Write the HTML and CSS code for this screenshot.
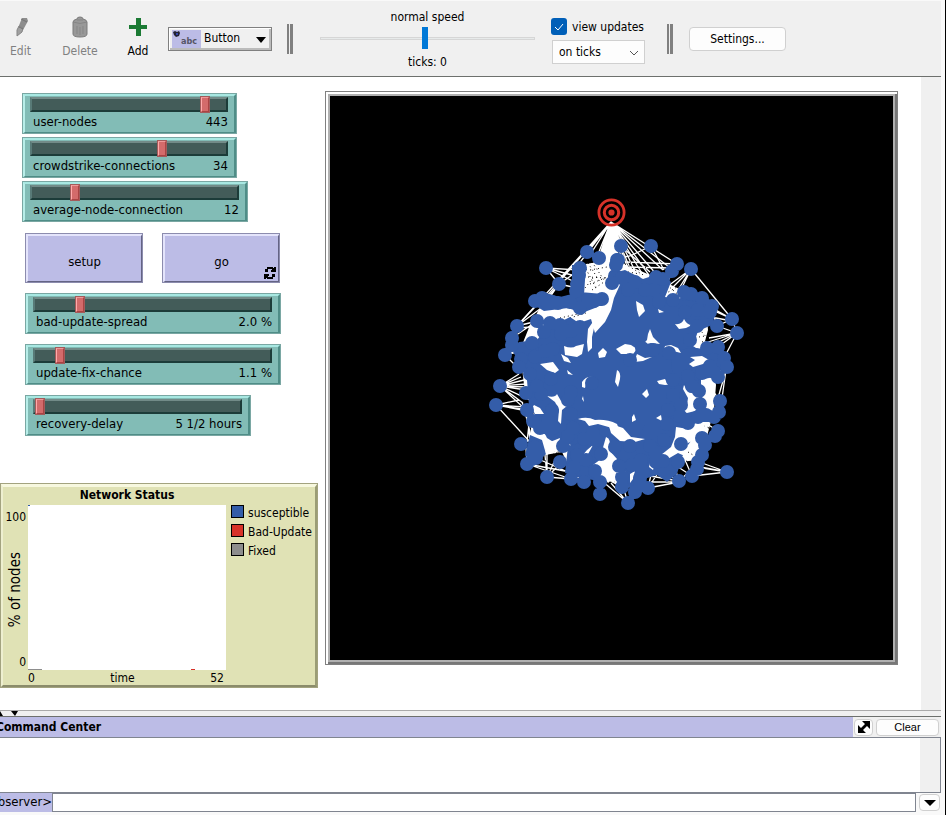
FILE: index.html
```html
<!DOCTYPE html>
<html lang="en">
<head>
<meta charset="utf-8">
<title>NetLogo</title>
<link rel="stylesheet" href="styles.css">
</head>
<body>
<div class="window">
  <header class="toolbar">
    <button class="tool" disabled>
      <svg width="20" height="22" viewBox="0 0 20 22"><path d="M11 2l5 0 1 3-5 9-5-2z" fill="#8d8d8d"/><path d="M8 10l4 2-1 4-5 4 0-6z" fill="#a0a0a0" stroke="#858585"/><path d="M10 3l6 3M8 11l4 2" stroke="#747474"/></svg>
      Edit
    </button>
    <button class="tool" disabled>
      <svg width="20" height="22" viewBox="0 0 20 22"><path d="M3 6q0-2 4-3 0-2 3-2t3 2q4 1 4 3v12q0 3-7 3t-7-3z" fill="#989898" stroke="#7b7b7b"/><path d="M3 6q7 3 14 0M7 4h6M7 10v8M10 11v8M13 10v8" fill="none" stroke="#858585"/></svg>
      Delete
    </button>
    <button class="tool">
      <svg width="20" height="22" viewBox="0 0 20 22"><path d="M8 2h5v7h6v4h-6v7H8v-7H1V9h7z" fill="#1b7a34"/></svg>
      Add
    </button>
    <div class="combo">
      <svg class="combo-icon" width="29" height="18" viewBox="0 0 29 18"><path fill="#bcbce6" d="M0 0h29v18H0z"/><path d="M1 2l2-1 2 1 2-1 1 2-1 3-3 1-2-2z" fill="#223"/><path d="M4 3h2v2H4z" fill="#34a"/><text x="9" y="14">abc</text></svg>
      <select class="combo-select" aria-label="Widget type"><option>Button</option></select>
      <svg class="combo-arrow" width="10" height="6" viewBox="0 0 10 6"><path d="M0 0h10L5 6z"/></svg>
    </div>
    <span class="divider"></span>
    <div class="speed">
      <label for="speed">normal speed</label>
      <input id="speed" class="speed-range" type="range" min="0" max="100" value="49">
      <span>ticks: 0</span>
    </div>
    <div class="updates">
      <label class="check"><input type="checkbox" checked><svg width="16" height="17" viewBox="0 0 16 17"><path d="M4 9l3 3 5-6" fill="none" stroke="#fff"/></svg>view updates</label>
      <div class="mode">
        <select aria-label="Update mode"><option>on ticks</option></select>
        <svg width="10" height="6" viewBox="0 0 10 6"><path d="M1 1l4 4 4-4" fill="none" stroke="#555"/></svg>
      </div>
    </div>
    <span class="divider"></span>
    <button class="settings">Settings...</button>
  </header>

  <main class="workspace">
    <section class="panel">
      <div class="group">
        <div class="slider medium"><input id="s1" type="range" min="0" max="485" value="443"><label for="s1">user-nodes</label><output for="s1">443</output></div>
        <div class="slider medium"><input id="s2" type="range" min="0" max="50" value="34"><label for="s2">crowdstrike-connections</label><output for="s2">34</output></div>
        <div class="slider large"><input id="s3" type="range" min="0" max="61" value="12"><label for="s3">average-node-connection</label><output for="s3">12</output></div>
      </div>
      <div class="group spaced">
        <div class="actions">
          <button class="action">setup</button>
          <button class="action">go
            <svg class="forever" width="12" height="12" viewBox="0 0 12 12"><path d="M1 5V2h2V0h6v1h1V0h2v5H7V3h1V2H4v3zM11 7v3H9v2H3v-1H2v1H0V7h5v2H4v1h4V7z"/></svg>
          </button>
        </div>
        <div class="slider wide"><input id="s4" type="range" min="0" max="11.2" step="0.1" value="2"><label for="s4">bad-update-spread</label><output for="s4">2.0 %</output></div>
        <div class="slider wide"><input id="s5" type="range" min="0" max="12.4" step="0.1" value="1.1"><label for="s5">update-fix-chance</label><output for="s5">1.1 %</output></div>
        <div class="slider large"><input id="s6" type="range" min="0" max="10" value="0"><label for="s6">recovery-delay</label><output for="s6">5 1/2 hours</output></div>
      </div>
      <section class="plot">
        <h2>Network Status</h2>
        <div class="y-axis"><span>100</span><span class="y-name">% of nodes</span><span>0</span></div>
        <svg class="chart" viewBox="0 0 198 165" preserveAspectRatio="none"><path fill="#fff" d="M0 0h198v165H0z"/><path fill="#345da9" d="M0 0h2v1H0z"/><path fill="#8d8d8d" d="M0 164h14v1H0z"/><path fill="#d73229" d="M163 164h4v1h-4z"/></svg>
        <ul class="legend"><li><i class="blue"></i>susceptible</li><li><i class="red"></i>Bad-Update</li><li><i class="gray"></i>Fixed</li></ul>
        <div class="x-axis"><span>0</span><span>time</span><span>52</span></div>
      </section>
    </section>

    <div class="world">
      <svg viewBox="330 96 563 564" role="img" aria-label="Node network">
        <path fill="#000" d="M330 96h563v564H330z"/>
        <g fill="none" stroke="#fff" stroke-width="1.3">
          <path d="M611 222L546 297M611 222L517 326M611 222L562 278M611 222L578 265M611 222L587 252M611 222L588 258M611 222L594 264M611 222L599 258M611 222L600 285M611 222L602 285M611 222L604 285M611 222L606 285M611 222L608 285M611 222L610 285M611 222L613 285M611 222L615 270M611 222L619 262M611 222L624 270M611 222L628 278M611 222L632 280M611 222L636 283M611 222L641 283M611 222L646 280M611 222L651 278M611 222L657 275M611 222L663 270M611 222L669 267M611 222L677 264"/>
          <path d="M651 246L664 270M651 246L630 256L600 262M621 246L650 272M626 262L677 264M625 267L672 268M691 269L732 319M691 269L668 292M691 269L673 298M691 269L676 300M677 264L660 296M691 269L668 286"/>
          <path d="M546 268L580 270L577 283L546 268L559 284L575 273M546 268L590 280M587 252L599 258L617 260M559 284L548 300M559 284L540 306M559 284L577 288"/>
          <path d="M517 326L535 307M517 326L548 303M517 326L537 321L545 332M517 328L560 325M512 338L537 321M512 345L532 343L550 330M505 355L519 350L530 358M505 355L516 366M505 355L537 347M517 326L550 318M519 367L519 355M512 345L526 356"/>
          <path d="M500 386L519 374M500 386L521 377M500 386L524 380M500 386L526 384M500 386L526 387M500 386L526 390M500 386L523 403M500 386L524 408L532 440M500 386L545 407M496 405L526 407M496 405L542 412M496 405L530 442M496 405L519 400M496 405L527 411M527 410L530 442M527 410L537 440M522 402L536 440M530 415L527 442"/>
          <path d="M521 444L538 437M527 464L545 446M527 464L565 471M527 464L526 448M527 464L571 479M547 477L547 452M547 477L545 455M547 477L571 479M547 477L562 462M536 458L568 472M547 477L556 458M628 503L601 480M628 503L611 483M628 503L621 480M628 503L634 482M600 494L602 482M584 482L583 468M571 479L590 475"/>
          <path d="M648 488L679 482L651 482M679 481L653 467M679 481L650 476M648 488L653 466M648 488L660 470M679 481L674 465M692 476L675 465M692 476L685 460M727 472L702 463M727 472L703 468M727 472L695 466M727 472L692 476M635 492L648 488M679 481L702 460"/>
          <path d="M732 319L712 310L717 326L732 319M732 321L700 315M732 319L705 304M737 333L717 326M737 333L709 338M737 333L708 342M737 333L711 346M737 333L718 347L701 340M732 319L737 333L724 358M724 358L727 367L705 348M727 367L718 398M726 370L722 398M727 367L708 378M718 377L708 395M720 401L709 385M718 431L704 422"/>
        </g>
        <path fill="#fff" d="M608 228L613 228 620 262 650 275 690 294 706 306 708 330 704 345 714 372 716 385 714 410 706 440 698 460 680 462 655 464 640 486 622 488 604 478 590 474 572 474 562 452 545 455 530 435 534 410 524 385 520 350 530 325 540 308 570 300 572 285 586 264 597 262Z"/>
        <g fill="none" stroke="#000" stroke-width="1" stroke-dasharray="1 3">
          <path d="M588 263L600 282M592 262L604 280M586 269L596 288M590 270l17 -3M588 277l18 1M590 284l20-8M560 318l22-5M570 318l16-5M667 285l14 12M665 294l17-10M699 329l11 12M699 337l12-2M702 342l9-3M542 449l22 4M549 456l14-6M545 461l16-2M622 476l12 4M626 470l10 4M700 425l10 3M697 432l12-4M688 452l10 6M686 461l12 5M675 430l10 4M650 460l10 10M607 480l8 2M550 444l10-6M574 297l10-10M592 290l12-8M585 288l8-10M625 264l20 12M630 262l22 8M628 272l12 2"/>
        </g>
        <path fill="#345da9" d="M613 273l12-3 18 9 18-6 10 9-6 15 14 2 12-8 18 8 8 10-5 16-14 6-5 15 12 8 9-4 10 13-5 10-10 2-8 4 0 12 3 18-6 6-8 14 4 8-6 8-6 12-5 17-10 8-10-7-13 4-10 12-8-6 0-13-9-4-4 8-10-3-8-6-8 4-12-10-5-17-15-1-8-5-10-20-8-12-2-26-4-12-10-16 6-10 18-2 7-9 14-8 12-6 9 6 12-4 4 14 10-11 6-12 3-12 9-20z"/>
        <path fill="#345da9" d="M532 298l10-6 18 5 20-5 23 2 4 8-12 6-13 5-14-5-24 3-10-6zM572 265h14l-2 30h-12zM525 455l5-20 12 5 4 14-12 12zM568 446l16-4 10 18 8 28-9-8-16-3-12-4z"/>
        <path fill="#345da9" d="M682 300l20 2 12 8-2 14-14 6-16-8zM673 350l24-2 22 4 0 24-20 4-22 6-6-20zM645 425h24l8 16-12 14-22 10-10-20z"/>
        <path fill="#fff" d="M588 319q5-7 9-8l8-2 4-10 4-8-5-5-3 10 4 7-6 10-10 4zM588 329q6-9 10-14l-4 13-2 9 0 11-4 4-1-10zM564 346q8 3 12 0l8-2-2 10-5 3-12-2zM603 348l4 4-2 5-6 1-1-5zM636 301l7 4 2 6-6 6-2-7zM658 309l6 3-5 1zM675 324q7 1 9-5 3 6 8 6l-6 3-7 1zM650 329l3 8 7 7-9-1-9 2 5-5 1-6zM625 344l6 1 6 4-4 5-12 0-5-5zM671 345l7 3 3 5-8-2-9-1 1-4z"/>
        <path fill="#fff" d="M540 364l13-2 6 8-4 3-8-3zM561 354l7 4 3 5-7-2zM567 370l6 5-5-1zM547 396q8 2 10-2l4 7 6 5-5 4-1 14-3-3 1-11-4-8zM534 405l6 3 4 6-9 0-3-6zM582 382q4-6 11-5l-7 6-1 5-3-1zM583 396l1 6-2-3zM578 419q9-3 17 1 12-1 22 4l3 8-8-4-14-4-9 2-4-5zM542 438l8 4 10-4-3 13-11 4-1-9zM606 437q6 2 3 13l8 9-2 18-7 6-7-9-8-9 8-6 1-8zM587 450l6-5-6 11-5 0z"/>
        <path fill="#fff" d="M617 370q4 2 3 9l-2 8-3-5zM637 354l8 4 7-1-9 4-9 1zM657 381l8-2 2 4 8 1-10 1-6-1zM647 389l2 6-3 3-4-4zM634 414l2 6-4 2 0-5zM661 415l1 6-6-3zM684 385l4 7 7 2 8-2 4-8 4 12-8 8-8 7-8 2-8-3 8-5 1-7-5-9zM608 423l15 5 8 9 14 2-10 3-15-1-9-8zM676 427l12 2 14-7 5 8-10 9-9 4-1 14-9-4-12 7-5-5 10-8 4-10zM606 464l9 4-1 15-10-5 3-8zM630 474l5-3-2 8-3 4zM650 463l7-4-4 11-4-3zM690 357l12-1 7 4-6 4-10 3-4-3 6-4z"/>
        <g class="nodes">
          <path d="M587 252h0M599 258h0M546 268h0M559 284h0M580 268h0M579 275h0M577 284h0M576 291h0M535 301h0M542 298h0M548 303h0M517 326h0M537 321h0M512 338h0M512 345h0M532 343h0M505 355h0M544 332h0M550 323h0M560 325h0M580 327h0M602 299h0M594 301h0M588 300h0M580 308h0M570 302h0M558 303h0M615 276h0M617 260h0M561 334h0M552 302h0M571 331h0M545 351h0M553 349h0M535 357h0M521 359h0"/>
          <path d="M621 246h0M651 246h0M618 260h0M677 264h0M691 269h0M672 271h0M663 279h0M656 277h0M684 292h0M691 294h0M702 298h0M712 306h0M732 319h0M737 333h0M717 326h0M673 300h0M685 312h0M698 310h0M710 312h0M697 326h0M707 348h0M718 347h0M724 358h0M642 348h0M653 350h0M669 353h0M654 290h0M635 282h0M622 278h0M630 360h0M645 290h0M659 302h0M690 340h0M612 283h0M628 290h0M616 265h0"/>
          <path d="M519 367h0M500 386h0M496 405h0M526 393h0M527 410h0M521 444h0M527 464h0M535 447h0M536 458h0M547 477h0M560 462h0M563 446h0M571 479h0M584 482h0M600 494h0M574 467h0M600 482h0M595 471h0M601 454h0M615 447h0M533 421h0M540 428h0M551 379h0M592 383h0M530 374h0M537 386h0M552 410h0M571 414h0M573 428h0M548 428h0M586 460h0M584 439h0M596 440h0M577 455h0M534 453h0M541 394h0M548 420h0M553 428h0M568 400h0M568 436h0M571 392h0M593 433h0"/>
          <path d="M727 472h0M720 401h0M719 412h0M714 417h0M718 431h0M715 436h0M727 367h0M718 377h0M700 404h0M681 444h0M702 438h0M705 445h0M702 455h0M697 469h0M692 476h0M679 481h0M678 462h0M663 461h0M648 488h0M640 482h0M635 492h0M628 503h0M622 487h0M619 466h0M622 477h0M632 465h0M630 446h0M688 423h0M681 405h0M702 373h0M692 386h0M643 471h0M641 460h0M699 391h0M650 446h0M710 366h0M656 462h0M688 376h0M664 440h0M698 462h0M673 380h0M673 395h0M668 410h0M667 424h0M698 417h0M706 415h0M680 416h0M714 372h0M655 452h0M640 478h0"/>
        </g>
        <g fill="none" stroke="#d73229"><circle cx="611.5" cy="212.5" r="12.6" stroke-width="2.8"/><circle cx="611.5" cy="212.5" r="7.2" stroke-width="3"/><circle cx="611.5" cy="212.5" r="1.6" stroke-width="3"/></g>
      </svg>
    </div>
    <div class="scroll"></div>
  </main>

  <section class="console">
    <div class="splitter"><svg width="20" height="5" viewBox="0 0 20 5"><path d="M-3 5h6L0 0zM11 0h7l-3 5z"/></svg></div>
    <div class="console-head">
      <h2>Command Center</h2>
      <button class="expand" aria-label="Detach"><svg width="12" height="12" viewBox="0 0 12 12"><path d="M4 0h8v8L9 5 5 9l3 3H0V4l3 3 4-4z"/></svg></button>
      <button class="clear">Clear</button>
    </div>
    <div class="history"><div class="scroll"></div></div>
    <div class="prompt">
      <label for="cmd">observer&gt;</label>
      <input id="cmd" type="text">
      <button class="recent" aria-label="Command history"><svg width="12" height="6" viewBox="0 0 12 6"><path d="M0 0h12L6 6z"/></svg></button>
    </div>
  </section>
</div>
</body>
</html>
```
FILE: styles.css
```css
* { box-sizing: border-box; }
body, h2, ul { margin: 0; padding: 0; }
body, button, select, input {
  font-family: "DejaVu Sans Condensed", "DejaVu Sans", "Noto Sans", sans-serif;
  font-size: 12px;
  color: #000;
}
body { background: #f9f9f9; line-height: 16px; }
svg { display: block; flex: none; }
h2 { font-size: 12px; font-weight: bold; }
button { padding: 0; }

.window {
  min-height: 100vh;
  display: flex;
  flex-direction: column;
  border-right: 1px solid #000;
  padding: 1px 4px 3px 0;
  overflow: hidden;
}

/* Toolbar */
.toolbar {
  display: flex;
  align-items: center;
  height: 76px;
  background: #f0f0f0;
  border-bottom: 1px solid #6d706d;
}
.tool {
  width: 58px;
  display: flex;
  flex-direction: column;
  align-items: center;
  gap: 5px;
  border: 0;
  background: none;
  margin-top: -2px;
  line-height: 16px;
}
.tool:first-child { width: 41px; margin-right: 10px; }
.tool:disabled { color: #808080; }
.combo {
  display: flex;
  align-items: center;
  position: relative;
  width: 104px;
  height: 24px;
  margin-left: 1px;
  border: 1px solid #808080;
  box-shadow: inset 1px 1px #fff, inset -2px -2px #bbb;
  padding-left: 3px;
}
.combo-icon text { font: bold 9px "DejaVu Sans Condensed", sans-serif; fill: #556; }
.combo-select {
  appearance: none;
  flex: 1;
  border: 0;
  background: none;
  padding: 0 0 2px 3px;
}
.combo-arrow { position: absolute; right: 5px; top: 9px; }
.divider {
  width: 6px;
  height: 30px;
  margin-left: 15px;
  border: solid #808080;
  border-width: 0 3px 0 2px;
}
.speed {
  width: 215px;
  margin-left: 27px;
  padding-top: 1px;
  display: flex;
  flex-direction: column;
  align-items: center;
}
.speed-range { appearance: none; width: 100%; height: 22px; margin: 3px 0 4px; background: none; }
.speed-range::-webkit-slider-runnable-track { height: 3px; background: #e7eaea; border: 1px solid #d6d6d6; }
.speed-range::-webkit-slider-thumb { appearance: none; width: 6px; height: 22px; margin-top: -11px; background: #0078d7; }
.updates { margin-left: 16px; padding-top: 4px; width: 101px; }
.check { display: flex; align-items: center; gap: 5px; white-space: nowrap; position: relative; height: 18px; }
.check input { position: absolute; opacity: 0; margin: 0; }
.check svg { background: #005fb8; border-radius: 3px; }
.mode { position: relative; width: 93px; margin: 4px 0 0 1px; }
.mode select {
  appearance: none;
  display: block;
  width: 100%;
  height: 24px;
  padding: 0 6px;
  background: #fdfdfd;
  border: 1px solid #d0d0d0;
}
.mode svg { position: absolute; right: 6px; top: 10px; }
.settings {
  width: 97px;
  height: 24px;
  margin-left: 16px;
  background: #fdfdfd;
  border: 1px solid #d0d0d0;
  border-radius: 4px;
}

/* Model interface */
.workspace { flex: 1; display: flex; background: #fff; }
.scroll { width: 20px; background: #f0f0f0; }
.panel { width: 318px; padding-top: 16px; flex: none; }
.group { display: flex; flex-direction: column; gap: 3px; padding-left: 22px; }
.spaced { gap: 10px; padding: 11px 0 0 25px; }
.slider {
  display: grid;
  grid-template-columns: 1fr auto;
  align-content: start;
  height: 41px;
  padding: 1px 6px 0 5px;
  background: #82bcb6;
  border: solid;
  border-width: 3px 3px 2px 3px;
  border-color: #a8e8e2 #4f8d87 #4f8d87 #b8eee9;
  outline: 1px solid #7aa7a3;
  outline-offset: -1px;
}
.slider.medium { width: 215px; }
.slider.large { width: 226px; }
.slider.wide { width: 256px; }
.slider input { grid-column: 1 / 3; appearance: none; width: 100%; height: 15px; margin: 0; background: none; }
.slider input::-webkit-slider-runnable-track {
  height: 15px;
  background: #435c59;
  border: 2px solid;
  border-color: #728b88 #1c3c39 #1c3c39 #587a77;
}
.slider input::-webkit-slider-thumb {
  appearance: none;
  width: 10px;
  height: 17px;
  margin-top: -3px;
  background: #d36b6b;
  border: 2px solid;
  border-color: #e99 #a44 #a44 #faa;
  outline: 1px solid #a35b5b;
  outline-offset: -1px;
}
.slider label { padding-left: 3px; }
.slider label, .slider output { margin-top: 2px; font-size: 13px; white-space: nowrap; }
.actions { display: flex; gap: 19px; }
.action {
  position: relative;
  width: 118px;
  height: 50px;
  padding-top: 6px;
  font-size: 13px;
  background: #bcbce6;
  border: solid;
  border-width: 3px 2px 2px 3px;
  border-color: #e4e4fb #646484 #646484 #e4e4fb;
  outline: 1px solid #8c8cae;
  outline-offset: -1px;
}
.forever { position: absolute; right: 2px; bottom: 2px; }

/* Plot */
.plot {
  display: grid;
  grid-template-columns: 25px 198px 1fr;
  grid-template-rows: 18px 165px 15px;
  margin-top: 47px;
  background: #e0e2b5;
  border: solid;
  border-width: 4px 3px 3px;
  border-color: #f7f8df #9b9d76 #8b8c6b #eeefd0;
  outline: 1px solid #a3a37f;
  outline-offset: -1px;
}
.plot h2 { grid-column: 1 / 3; padding-left: 25px; text-align: center; }
.y-axis { grid-column: 1; display: flex; flex-direction: column; justify-content: space-between; align-items: flex-end; padding: 4px 2px 0 0; }
.y-name { writing-mode: vertical-rl; transform: rotate(180deg); font-size: 15px; align-self: center; }
.chart { width: 198px; height: 165px; }
.legend { list-style: none; grid-row: 2; grid-column: 3; padding-left: 5px; }
.legend li { display: flex; gap: 4px; height: 19px; white-space: nowrap; }
.legend i { flex: none; width: 13px; height: 13px; border: 1px solid #000; }
.blue { background: #345da9; }
.red { background: #d73229; }
.gray { background: #8d8d8d; }
.x-axis { grid-column: 2; display: flex; justify-content: space-between; padding-right: 2px; }

/* World view */
.world {
  flex: 1;
  align-self: flex-start;
  margin: 14px 23px 0 7px;
  border: 1px solid #808080;
  background: #b0b0b0;
  box-shadow: inset 2px 2px #fff, inset -2px -2px #777;
  padding: 4px;
}
.world svg { width: 100%; }
.nodes { stroke: #345da9; stroke-width: 14px; stroke-linecap: round; }

/* Command center */
.splitter { height: 7px; background: #f0f0f0; border-top: 1px solid #aaa; border-bottom: 1px solid #6d706d; }
.console-head { display: flex; align-items: center; height: 20px; background: #f0f0f0; }
.console-head h2 { flex: 1; height: 100%; line-height: 21px; background: #bcbce6; text-indent: -4px; }
.expand, .clear, .recent {
  display: grid;
  place-items: center;
  height: 17px;
  background: #fdfdfd;
  border: 1px solid #d0d0d0;
  border-radius: 4px;
}
.expand { width: 19px; margin: 0 3px 0 1px; }
.clear { width: 63px; margin-right: 2px; font: 11px "Liberation Sans", sans-serif; }
.history { height: 56px; display: flex; justify-content: flex-end; background: #fff; border: solid #808590; border-width: 1px 1px 1px 0; }
.prompt { display: flex; height: 19px; align-items: center; background: #f9f9f9; }
.prompt label { width: 52px; height: 100%; line-height: 18px; font-size: 13px; background: #bcbce6; display: flex; justify-content: flex-end; }
.prompt input { flex: 1; min-width: 0; height: 100%; border: 1px solid #808590; background: #fff; }
.recent { width: 21px; margin: 0 1px 0 3px; }
```
